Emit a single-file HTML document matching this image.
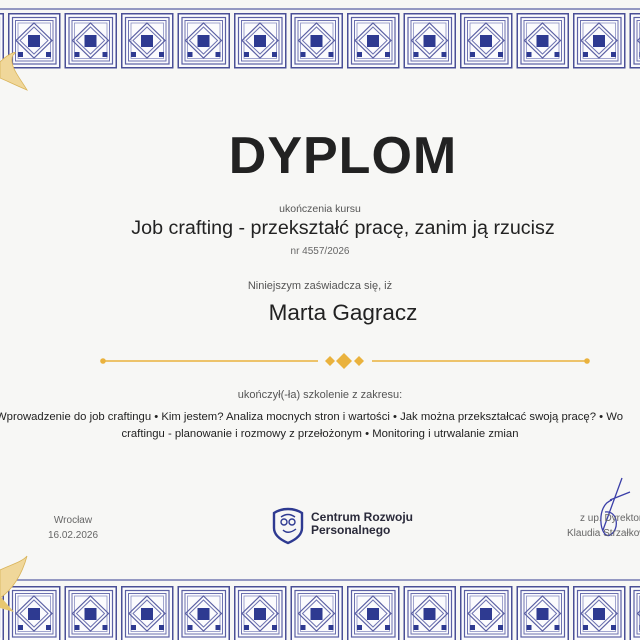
<!DOCTYPE html>
<html><head><meta charset="utf-8"><style>
html,body{margin:0;padding:0}
body{width:640px;height:640px;overflow:hidden;position:relative;background:#f7f7f5;font-family:"Liberation Sans",sans-serif;color:#2a2a2a}
.t{position:absolute;left:0;width:640px;text-align:center;white-space:nowrap}
.s{left:23px}
</style></head><body>
<svg width="640" height="640" style="position:absolute;left:0;top:0">
<defs>
<g id="tile">
<rect x="0.75" y="0.75" width="51" height="54" fill="#fbfbfd" stroke="#4a4f96" stroke-width="1.5"/>
<rect x="4.5" y="4.5" width="43.5" height="46.5" fill="none" stroke="#5a5fa3" stroke-width="1.2"/>
<rect x="7.5" y="7.5" width="37.5" height="40.5" fill="none" stroke="#6d72b0" stroke-width="1"/>
<rect x="10" y="10" width="32.5" height="35.5" fill="none" stroke="#8a8fc2" stroke-width="0.8"/>
<path d="M26 10 L44 27.5 L26 45 L8 27.5Z" fill="none" stroke="#5a5fa3" stroke-width="1.2"/>
<path d="M26 14 L40 27.5 L26 41 L12 27.5Z" fill="none" stroke="#6d72b0" stroke-width="1"/>
<rect x="20" y="22" width="12" height="12" fill="#2e3a91"/>
<rect x="10" y="39" width="5" height="5" fill="#2e3a91"/>
<rect x="38" y="39" width="5" height="5" fill="#2e3a91"/>
</g>
</defs>
<line x1="0" y1="9" x2="640" y2="9" stroke="#5a5fa3" stroke-width="1.2"/>
<g transform="translate(8,13)">
<use href="#tile" x="-56.5"/><use href="#tile" x="0"/><use href="#tile" x="56.5"/><use href="#tile" x="113"/><use href="#tile" x="169.5"/><use href="#tile" x="226"/><use href="#tile" x="282.5"/><use href="#tile" x="339"/><use href="#tile" x="395.5"/><use href="#tile" x="452"/><use href="#tile" x="508.5"/><use href="#tile" x="565"/><use href="#tile" x="621.5"/>
</g>
<line x1="0" y1="580" x2="640" y2="580" stroke="#5a5fa3" stroke-width="1.2"/>
<g transform="translate(8,586)">
<use href="#tile" x="-56.5"/><use href="#tile" x="0"/><use href="#tile" x="56.5"/><use href="#tile" x="113"/><use href="#tile" x="169.5"/><use href="#tile" x="226"/><use href="#tile" x="282.5"/><use href="#tile" x="339"/><use href="#tile" x="395.5"/><use href="#tile" x="452"/><use href="#tile" x="508.5"/><use href="#tile" x="565"/><use href="#tile" x="621.5"/>
</g>
<path d="M0 62 C10 52 20 50 13 55 C8 65 20 78 27 90 C15 85 5 80 0 78Z" fill="#f0d79a" stroke="#d9b45a" stroke-width="0.8"/>
<path d="M0 570 C10 565 22 562 27 556 C22 575 12 590 0 598Z" fill="#f0d79a" stroke="#d9b45a" stroke-width="0.8"/>
<path d="M0 596 L14 612 L0 608Z" fill="#e8c770"/>
<line x1="103" y1="361" x2="318" y2="361" stroke="#eab23d" stroke-width="1.6"/>
<line x1="372" y1="361" x2="586" y2="361" stroke="#eab23d" stroke-width="1.6"/>
<circle cx="103" cy="361" r="2.8" fill="#eab23d"/><circle cx="587" cy="361" r="2.8" fill="#eab23d"/>
<path d="M330 356 L335 361 L330 366 L325 361Z" fill="#eab23d"/>
<path d="M344 353 L352 361 L344 369 L336 361Z" fill="#eab23d"/>
<path d="M359 356 L364 361 L359 366 L354 361Z" fill="#eab23d"/>
<path d="M288 509 C282 509 277 511 274 513 L274 528 C274 535 281 540 288 543 C295 540 302 535 302 528 L302 513 C299 511 294 509 288 509Z" fill="none" stroke="#2e3a91" stroke-width="2.4"/>
<circle cx="284" cy="522" r="3" fill="none" stroke="#2e3a91" stroke-width="1.4"/>
<circle cx="292" cy="522" r="3" fill="none" stroke="#2e3a91" stroke-width="1.4"/>
<path d="M281 517 Q288 512 295 517 M283 530 Q288 535 296 529" fill="none" stroke="#2e3a91" stroke-width="1.4"/>
<path d="M622 478 L603 530 M612 500 C595 505 600 540 610 535 C620 530 618 510 605 512 M610 500 L630 492" fill="none" stroke="#3b3fa8" stroke-width="1.3"/>
</svg>
<div class="t s" style="top:126px;font-size:52px;font-weight:bold;color:#222;letter-spacing:1px">DYPLOM</div>
<div class="t" style="top:203px;font-size:10.5px;color:#555">ukończenia kursu</div>
<div class="t s" style="top:217px;font-size:19.7px;color:#222">Job crafting - przekształć pracę, zanim ją rzucisz</div>
<div class="t" style="top:246px;font-size:10px;color:#666">nr 4557/2026</div>
<div class="t" style="top:280px;font-size:11px;color:#555">Niniejszym zaświadcza się, iż</div>
<div class="t s" style="top:300px;font-size:22.5px;color:#222">Marta Gagracz</div>
<div class="t" style="top:389px;font-size:11px;color:#555">ukończył(-ła) szkolenie z zakresu:</div>
<div style="position:absolute;top:411px;left:-4px;white-space:nowrap;font-size:11.3px;color:#222">Wprowadzenie do job craftingu • Kim jestem? Analiza mocnych stron i wartości • Jak można przekształcać swoją pracę? • Wo</div>
<div class="t" style="top:428px;font-size:11.3px;color:#222">craftingu - planowanie i rozmowy z przełożonym • Monitoring i utrwalanie zmian</div>
<div style="position:absolute;left:33px;width:80px;text-align:center;top:513px;font-size:10px;color:#666;line-height:15px">Wrocław<br>16.02.2026</div>
<div style="position:absolute;left:311px;top:511px;font-size:12px;font-weight:bold;color:#2a2a3a;line-height:13px">Centrum Rozwoju<br>Personalnego</div>
<div style="position:absolute;left:580px;top:513px;font-size:10px;color:#666;white-space:nowrap">z up. Dyrektora</div>
<div style="position:absolute;left:567px;top:528px;font-size:10px;color:#666;white-space:nowrap">Klaudia Strzałkowska</div>
</body></html>
